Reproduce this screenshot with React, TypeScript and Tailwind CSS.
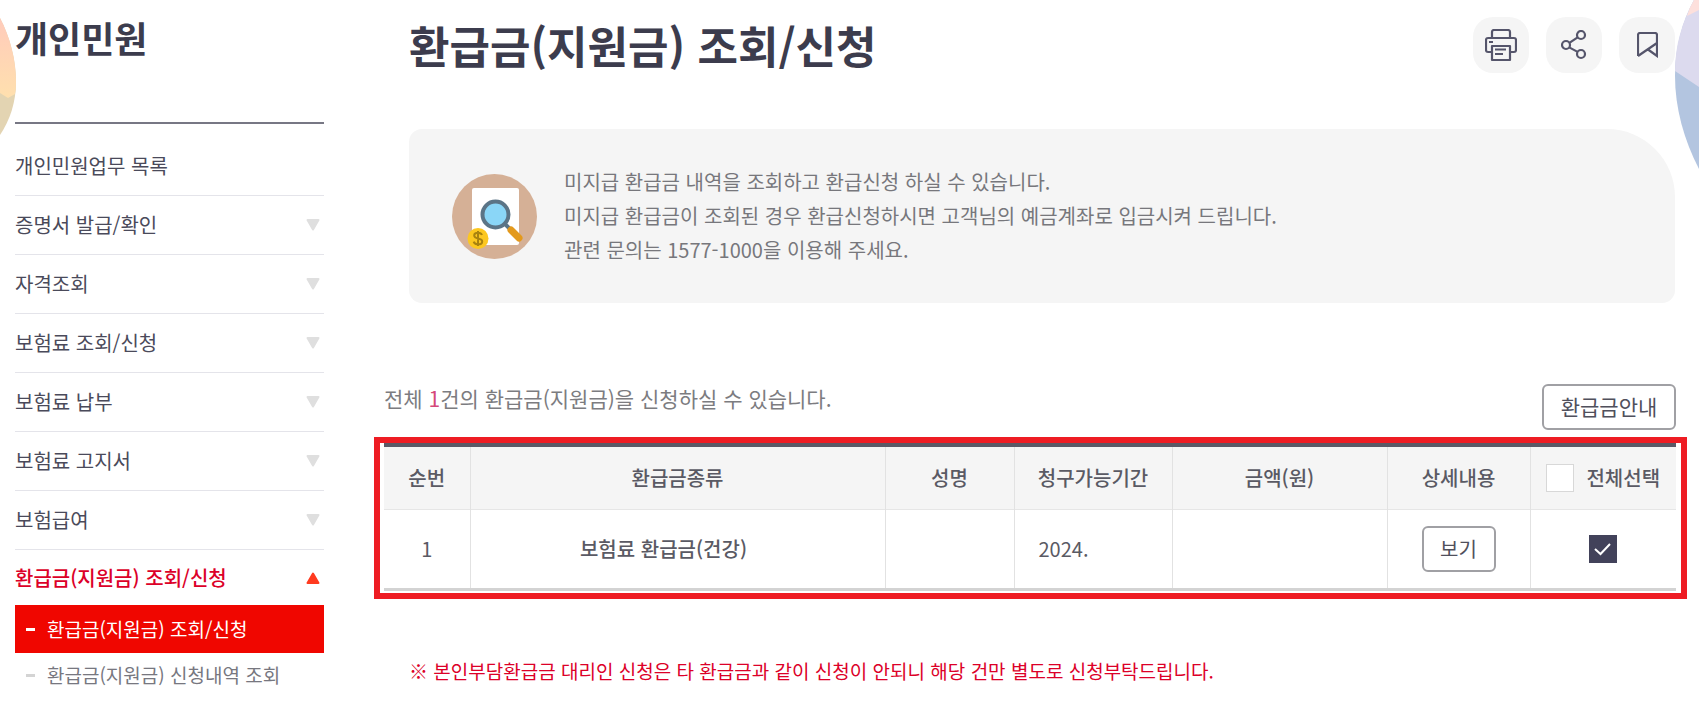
import React, { useState } from "react";
import { clsx } from "clsx";

const MENU = [
  { label: "개인민원업무 목록", expandable: false },
  { label: "증명서 발급/확인", expandable: true },
  { label: "자격조회", expandable: true },
  { label: "보험료 조회/신청", expandable: true },
  { label: "보험료 납부", expandable: true },
  { label: "보험료 고지서", expandable: true },
  { label: "보험급여", expandable: true },
];

const SUB_MENU = ["환급금(지원금) 조회/신청", "환급금(지원금) 신청내역 조회"];

const INFO_LINES = [
  "미지급 환급금 내역을 조회하고 환급신청 하실 수 있습니다.",
  "미지급 환급금이 조회된 경우 환급신청하시면 고객님의 예금계좌로 입금시켜 드립니다.",
  "관련 문의는 1577-1000을 이용해 주세요.",
];

const PrintIcon = () => (
  <svg width="32" height="33" viewBox="0 0 32 33" fill="none" stroke="#55556b" strokeWidth="2.2" strokeLinejoin="round">
    <path d="M7 9V3a2 2 0 0 1 2-2h14a2 2 0 0 1 2 2v6" />
    <path d="M7 23H3a2 2 0 0 1-2-2V11a2 2 0 0 1 2-2h26a2 2 0 0 1 2 2v10a2 2 0 0 1-2 2h-4" />
    <path d="M7 17h18v14H7zM4 13h4M10 20.5h11M10 25h8" />
  </svg>
);

const ShareIcon = () => (
  <svg width="26" height="30" viewBox="0 0 26 30" fill="none" stroke="#55556b" strokeWidth="2.2">
    <circle cx="5" cy="15" r="4" />
    <circle cx="20" cy="5" r="4" />
    <circle cx="20" cy="24" r="4" />
    <path d="M8.4 12.8 16.6 7.3M8.2 17.4l8.4 4.5" />
  </svg>
);

const BookmarkIcon = () => (
  <svg width="21" height="26" viewBox="0 0 21 26" fill="none" stroke="#55556b" strokeWidth="2.2">
    <path d="M1 24V3a2 2 0 0 1 2-2h15a2 2 0 0 1 2 2v21l-9-6.5M1 24l19-13" />
  </svg>
);

const RefundIcon = () => (
  <svg width="85" height="85" viewBox="0 0 85 85" className="shrink-0">
    <circle cx="42.5" cy="42.5" r="42.5" fill="#d5b096" />
    <rect x="20" y="14" width="47" height="57" rx="2" fill="#fff" />
    <path d="m53 50 7 7" stroke="#5b7486" strokeWidth="4" />
    <circle cx="43.5" cy="40.5" r="13" fill="#8ad6f7" stroke="#5b7486" strokeWidth="4" />
    <path d="m59 56 8 8" stroke="#e3991c" strokeWidth="7" strokeLinecap="round" />
    <circle cx="26" cy="64.5" r="10.5" fill="#fcc720" />
    <path
      d="M30 61c-.6-1.6-2-2.3-4-2.3-2.2 0-3.8 1-3.8 2.7 0 4.3 8 1.7 8 6 0 1.8-1.7 2.900-4.1 2.900-2.3 0-3.900-1-4.400-2.700M26 57v15"
      fill="none"
      stroke="#a8820f"
      strokeWidth="2"
    />
  </svg>
);

const Arrow = ({ open = false }: { open?: boolean }) => (
  <svg
    width="14"
    height="12"
    viewBox="0 0 14 12"
    className={open ? "rotate-180 text-[#ff3b20]" : "text-[#dfdfdf]"}
  >
    <path d="M1.5 1h11L7 10.5z" fill="currentColor" stroke="currentColor" strokeWidth="2" strokeLinejoin="round" />
  </svg>
);

const Balloons = () => (
  <>
    <svg width="17" height="140" className="absolute top-0 left-0">
      <defs>
        <linearGradient id="peach" x1="0" y1="0" x2="0" y2="1">
          <stop offset="0" stopColor="#ffcbbb" />
          <stop offset="1" stopColor="#ffe0ae" />
        </linearGradient>
      </defs>
      <path d="M0 18C10 37 16 60 16 82c0 20-6 38-16 53z" fill="#e3d4b2" />
      <path d="M0 18C10 37 16 60 16 82q0 7-1 12l-7 4-8-5z" fill="url(#peach)" />
    </svg>
    <svg width="24" height="170" className="absolute top-0 right-0">
      <path d="M24 0h-5C7 22 0 48 0 76c0 32 9 64 24 93z" fill="#b3c5e0" />
      <path d="M24 0h-5C7 22 0 46 0 71l24 16z" fill="#dcdaee" />
      <path d="M24 0h-5Q14 8 12 16l12-6z" fill="#fde0dc" />
    </svg>
  </>
);

const CheckBox = ({
  id,
  label,
  checked,
  onChange,
}: {
  id: string;
  label?: string;
  checked: boolean;
  onChange: (value: boolean) => void;
}) => (
  <span className="relative inline-flex size-7">
    <input
      id={id}
      type="checkbox"
      aria-label={label}
      checked={checked}
      onChange={(e) => onChange(e.target.checked)}
      className="size-7 appearance-none border border-[#d8d8d8] bg-white checked:border-[#42425a] checked:bg-[#42425a]"
    />
    {checked && (
      <svg viewBox="0 0 28 28" className="pointer-events-none absolute inset-0" fill="none" stroke="#fff" strokeWidth="2">
        <path d="m6 14 5.5 5L21 9" />
      </svg>
    )}
  </span>
);

const Sidebar = () => (
  <aside className="w-[309px] shrink-0 pt-3">
    <h2 className="text-4xl leading-[50px] font-bold text-[#3c3c4d]">개인민원</h2>
    <nav className="mt-[60px] border-t-2 border-[#777784]">
      <ul>
        {MENU.map(({ label, expandable }) => (
          <li
            key={label}
            className={clsx("border-b border-[#e4e4ea]", expandable ? "h-[59px]" : "h-[72px] pt-3")}
          >
            <a href="#" className="flex h-full items-center justify-between pr-1 text-xl text-[#4a4a5a]">
              {label}
              {expandable && <Arrow />}
            </a>
          </li>
        ))}
        <li>
          <a href="#" className="flex h-[55px] items-center justify-between pr-1 text-xl font-medium text-[#dc0028]">
            환급금(지원금) 조회/신청
            <Arrow open />
          </a>
          <ul className="text-[19px]">
            {SUB_MENU.map((label, i) => (
              <li key={label}>
                <a
                  href="#"
                  className={clsx(
                    "flex items-center gap-3 pl-[11px]",
                    i === 0 ? "h-12 bg-[#f00600] text-white" : "h-11 text-[#77777f]",
                  )}
                >
                  <span className={clsx("h-[3px] w-[9px]", i === 0 ? "bg-white" : "bg-[#d4d4d4]")} />
                  {label}
                </a>
              </li>
            ))}
          </ul>
        </li>
      </ul>
    </nav>
  </aside>
);

const TH = "border-l border-[#e2e2e2] font-medium first:border-l-0";
const TD = "border-l border-[#e2e2e2] first:border-l-0";

const RefundTable = () => {
  const [selected, setSelected] = useState(true);
  const [all, setAll] = useState(false);

  const toggleAll = (value: boolean) => {
    setAll(value);
    setSelected(value);
  };

  return (
    <div className="border-[6px] border-[#ee1c23] pr-[5px] pb-0.5 pl-1">
      <table className="w-full table-fixed border-collapse text-xl text-[#5a5a64]">
        <colgroup>
          <col className="w-[86px]" />
          <col />
          <col className="w-[129px]" />
          <col className="w-[158px]" />
          <col className="w-[215px]" />
          <col className="w-[143px]" />
          <col className="w-[146px]" />
        </colgroup>
        <thead>
          <tr className="h-16 border-t-4 border-b border-t-[#5a5966] border-b-[#e6e6e6] bg-[#f5f5f5]">
            <th className={TH}>순번</th>
            <th className={TH}>환급금종류</th>
            <th className={TH}>성명</th>
            <th className={TH}>청구가능기간</th>
            <th className={TH}>금액(원)</th>
            <th className={TH}>상세내용</th>
            <th className={TH}>
              <div className="flex items-center justify-center gap-3">
                <CheckBox id="select-all" checked={all} onChange={toggleAll} />
                <label htmlFor="select-all">전체선택</label>
              </div>
            </th>
          </tr>
        </thead>
        <tbody>
          <tr className="h-20 border-b-3 border-[#d3d3d3] text-center">
            <td className={TD}>1</td>
            <td className={clsx(TD, "pr-7 font-medium")}>보험료 환급금(건강)</td>
            <td className={TD} />
            <td className={clsx(TD, "pl-6 text-left")}>2024.</td>
            <td className={TD} />
            <td className={TD}>
              <button className="h-[46px] w-[74px] rounded-md border-2 border-[#a0a0a4] bg-white align-middle text-[#50505c]">
                보기
              </button>
            </td>
            <td className={TD}>
              <div className="flex justify-center">
                <CheckBox id="row-1" label="1번 선택" checked={selected} onChange={setSelected} />
              </div>
            </td>
          </tr>
        </tbody>
      </table>
    </div>
  );
};

const ACTIONS = [
  { label: "인쇄", icon: <PrintIcon /> },
  { label: "공유", icon: <ShareIcon /> },
  { label: "북마크", icon: <BookmarkIcon /> },
];

export default function App() {
  return (
    <div
      lang="ko"
      className="relative flex gap-[50px] overflow-hidden bg-white pr-3 pl-[15px] font-['Noto_Sans_CJK_KR',sans-serif]"
    >
      <Balloons />
      <Sidebar />
      <main className="min-w-0 flex-1 pt-[17px]">
        <header className="flex h-14 items-center justify-between pr-3 pl-[35px]">
          <h1 className="text-[44px] leading-[56px] font-bold text-[#3c3c4d]">환급금(지원금) 조회/신청</h1>
          <div className="flex gap-[17px]">
            {ACTIONS.map(({ label, icon }) => (
              <button
                key={label}
                aria-label={label}
                className="flex size-14 items-center justify-center rounded-[20px] bg-[#f5f5f5]"
              >
                {icon}
              </button>
            ))}
          </div>
        </header>

        <section className="mt-14 mr-3 ml-[35px] flex items-center gap-[27px] rounded-[13px] rounded-tr-[68px] bg-[#f5f5f5] py-9 pl-[43px]">
          <RefundIcon />
          <div className="text-xl leading-[34px] text-[#77777c]">
            {INFO_LINES.map((line) => (
              <p key={line}>{line}</p>
            ))}
          </div>
        </section>

        <section className="mt-[81px]">
          <div className="mb-[7px] flex items-start justify-between pr-[11px] pl-2.5">
            <p className="text-[21px] leading-[28px] text-[#7c7c80]">
              전체 <em className="text-[#d5487a] not-italic">1</em>건의 환급금(지원금)을 신청하실 수 있습니다.
            </p>
            <button className="h-[46px] w-[134px] rounded-md border-2 border-[#a0a0a4] bg-white text-[21px] text-[#50505c]">
              환급금안내
            </button>
          </div>
          <RefundTable />
        </section>

        <p className="mt-[58px] pl-[35px] text-[19px] leading-[28px] text-[#dc0028]">
          ※ 본인부담환급금 대리인 신청은 타 환급금과 같이 신청이 안되니 해당 건만 별도로 신청부탁드립니다.
        </p>
      </main>
    </div>
  );
}
